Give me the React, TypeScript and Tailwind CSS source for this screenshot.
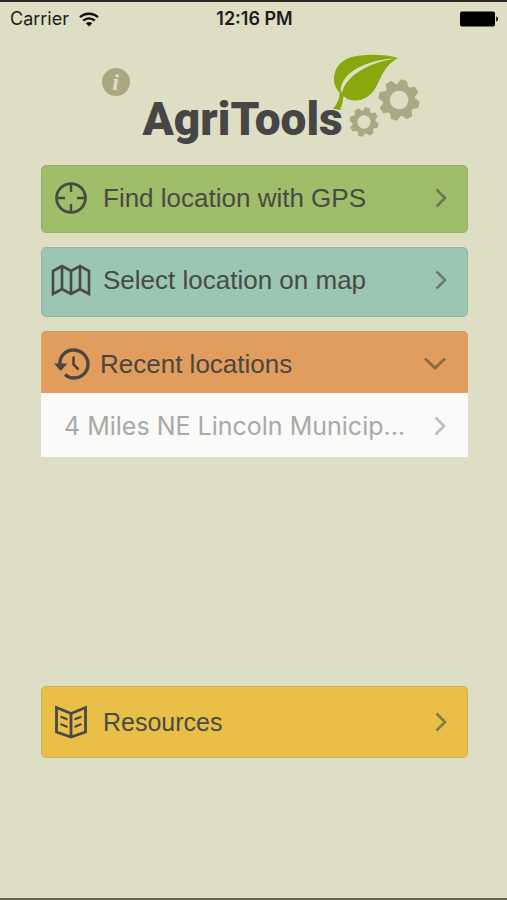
import { useState, type ReactNode } from "react";

const sans = "font-['Liberation_Sans',Arial,sans-serif]";

function Chevron({ className = "" }: { className?: string }) {
  return (
    <svg viewBox="0 0 12 20" className={`h-5 w-3 shrink-0 ${className}`} fill="none" stroke="currentColor" strokeWidth="2.6" aria-hidden="true">
      <path d="M1.5 1.5 10 10 1.5 18.5" />
    </svg>
  );
}

function StatusBar() {
  return (
    <header className="grid h-9 grid-cols-3 items-center border-t-2 border-[#302a28] pr-2 pl-[10px] font-['Inter',sans-serif] text-lg text-[#1c1c18]">
      <div className="flex items-center gap-[10px]">
        <span>Carrier</span>
        <svg viewBox="0 0 20 15" className="h-[15px] w-5" fill="none" stroke="#11110f" strokeWidth="2.4" aria-label="Wi-Fi">
          <path d="M1 5.2C6 .5 14 .5 19 5.2M4.2 8.7c3.4-3.1 8.2-3.1 11.6 0" />
          <path d="M6.8 11.3c1.9-1.7 4.5-1.7 6.4 0L10 14.6Z" fill="#11110f" stroke="none" />
        </svg>
      </div>
      <span className="text-center font-semibold whitespace-nowrap">12:16 PM</span>
      <svg viewBox="0 0 39 16" className="h-4 w-[39px] justify-self-end" aria-label="Battery full">
        <rect x="0" y="0.5" width="35" height="15" rx="2" />
        <path d="M36.2 5.5c2.4.6 2.4 4.4 0 5Z" />
      </svg>
    </header>
  );
}

function Gear({ className }: { className: string }) {
  const teeth = [0, 45, 90, 135, 180, 225, 270, 315];
  return (
    <svg viewBox="-21 -21 42 42" className={className} fill="none" aria-hidden="true">
      <g transform="rotate(14)">
        <circle r="12.7" stroke="#aaa984" strokeWidth="6.8" />
        {teeth.map((angle) => (
          <path key={angle} d="M-6-14-3.2-20.500h6.400l2.800 6.500Z" fill="#aaa984" transform={`rotate(${angle})`} />
        ))}
      </g>
    </svg>
  );
}

function Leaf() {
  return (
    <svg viewBox="0 0 66 57" className="absolute top-0 left-[190px] h-[57px] w-[66px]" aria-hidden="true">
      <path
        d="M65 4C52 0 30-.5 17 3.500 5 8 .5 17 1 27c.4 4 2 8 5.500 11.500C7 44 4 50 0 55l7 1c2-4.500 3-9 3.500-14 3 3 7 4.500 12 4.500C30 46.500 38 42 43 33 49 22 51 12 65 4Z"
        fill="#88a80d"
      />
      <path d="M62 4.500C42 5 10 14 7.500 36l1.500 3C13 21 36 9 62 4.500Z" fill="#dddec4" />
    </svg>
  );
}

function Logo() {
  return (
    <div className="flex h-[93px] justify-center">
      <div className="flex w-[320px] items-start pl-2">
        <button type="button" aria-label="Information" className="mt-8 flex size-7 shrink-0 items-center justify-center rounded-full bg-[#aaa984] font-['Liberation_Serif',serif] text-2xl font-bold text-[#dddec4] italic">
          i
        </button>
        <div className="relative mt-[18px] ml-[13px] h-[93px] w-[278px] shrink-0">
          <Leaf />
          <h1 className="pt-[34px] font-['Roboto',sans-serif] text-[46px] leading-[62px] font-black text-[#474546]">AgriTools</h1>
          <Gear className="absolute top-[53px] left-[206px] size-[30px]" />
          <Gear className="absolute top-[25px] left-[235px] size-[42px]" />
        </div>
      </div>
    </div>
  );
}

function GpsIcon() {
  return (
    <svg viewBox="0 0 32 32" className="size-8" fill="none" stroke="currentColor" strokeWidth="2.8" aria-hidden="true">
      <circle cx="16" cy="16" r="14.400" />
      <path d="M16 1v9M16 22v9M1 16h9M22 16h9" strokeWidth="2.400" />
    </svg>
  );
}

function MapIcon() {
  return (
    <svg viewBox="0 0 40 34" className="h-[34px] w-10" fill="none" stroke="currentColor" strokeWidth="2.600" aria-hidden="true">
      <path d="M2 8 11 3l9 5 9-5 9 5v23l-9-5-9 5-9-5-9 5ZM11 3v23M20 8v23M29 3v23" />
    </svg>
  );
}

function HistoryIcon() {
  return (
    <svg viewBox="0 0 36 32" className="h-8 w-9" fill="none" stroke="currentColor" strokeWidth="3.300" aria-hidden="true">
      <path d="M6 17C5 8.500 11.500 2 19.500 2S34 8.200 34 16s-6 14-14 14c-3.500 0-6.500-1.200-9-3.500" />
      <path d="M0 15.500h13.500L6.700 23Z" fill="currentColor" stroke="none" />
      <path d="M19.500 8.500v8l5 5" strokeWidth="2.600" />
    </svg>
  );
}

function BookIcon() {
  return (
    <svg viewBox="0 0 32 34" className="h-[34px] w-8" fill="none" stroke="currentColor" strokeWidth="2.800" aria-hidden="true">
      <path d="M1.500 2.500 16 8.500l14.500-6V27L16 32 1.500 27ZM16 8.500V32" />
      <path d="m5.500 11.500 7 3M5.500 19l7 3M26.500 11.500l-7 3M26.500 19l-7 3" strokeWidth="2.400" />
    </svg>
  );
}

function MenuButton({ icon, label, className }: { icon: ReactNode; label: string; className: string }) {
  return (
    <button type="button" className={`flex w-full items-center rounded-[5px] border pr-5 pl-[7px] text-left text-[#484b45] ${className}`}>
      <span className="flex w-11 shrink-0 justify-center">{icon}</span>
      <span className="ml-[10px] flex-1 leading-8 whitespace-nowrap">{label}</span>
      <Chevron className="opacity-60" />
    </button>
  );
}

export default function App() {
  const [open, setOpen] = useState(true);
  return (
    <div className={`flex min-h-screen flex-col border-b-2 border-[#64674b] bg-[#dddec4] ${sans}`}>
      <StatusBar />
      <Logo />
      <main className="mt-9 flex flex-col pr-[39px] pl-[41px] text-[26px]">
        <nav className="flex flex-col gap-[14px]" aria-label="Locations">
          <MenuButton icon={<GpsIcon />} label="Find location with GPS" className="h-[68px] border-[#9aad6d] bg-[#a0bd6a] pb-[2px]" />
          <MenuButton icon={<MapIcon />} label="Select location on map" className="h-[70px] border-[#96b5a0] bg-[#9bc6b3] pb-1" />
          <section>
            <button
              type="button"
              aria-expanded={open}
              onClick={() => setOpen(!open)}
              className="flex h-[62px] w-full items-center rounded-t-[5px] border-t border-[#b99c70] bg-[#e09d5d] pt-[2px] pr-[22px] pl-[13px] text-left text-[#4b463f]"
            >
              <HistoryIcon />
              <span className="ml-[10px] flex-1 leading-8 whitespace-nowrap">Recent locations</span>
              <svg viewBox="0 0 22 13" className="h-[13px] w-[22px] text-[#90683f]" fill="none" stroke="currentColor" strokeWidth="2.800" aria-hidden="true">
                <path d="m1 1.500 10 9.500 10-9.500" />
              </svg>
            </button>
            {open && (
              <button type="button" className="flex h-16 w-full items-center bg-[#fafaf8] pt-[2px] pr-[22px] pl-[23px] text-left font-['Inter',sans-serif] text-[25px] text-[#a9a9a8]">
                <span className="flex-1 leading-8 whitespace-nowrap">4 Miles NE Lincoln Municip...</span>
                <Chevron className="text-[#bdbdbc]" />
              </button>
            )}
          </section>
        </nav>
        <MenuButton icon={<BookIcon />} label="Resources" className="mt-[229px] h-[72px] border-[#c9b25a] bg-[#e9bf48] text-[25px]" />
      </main>
    </div>
  );
}
